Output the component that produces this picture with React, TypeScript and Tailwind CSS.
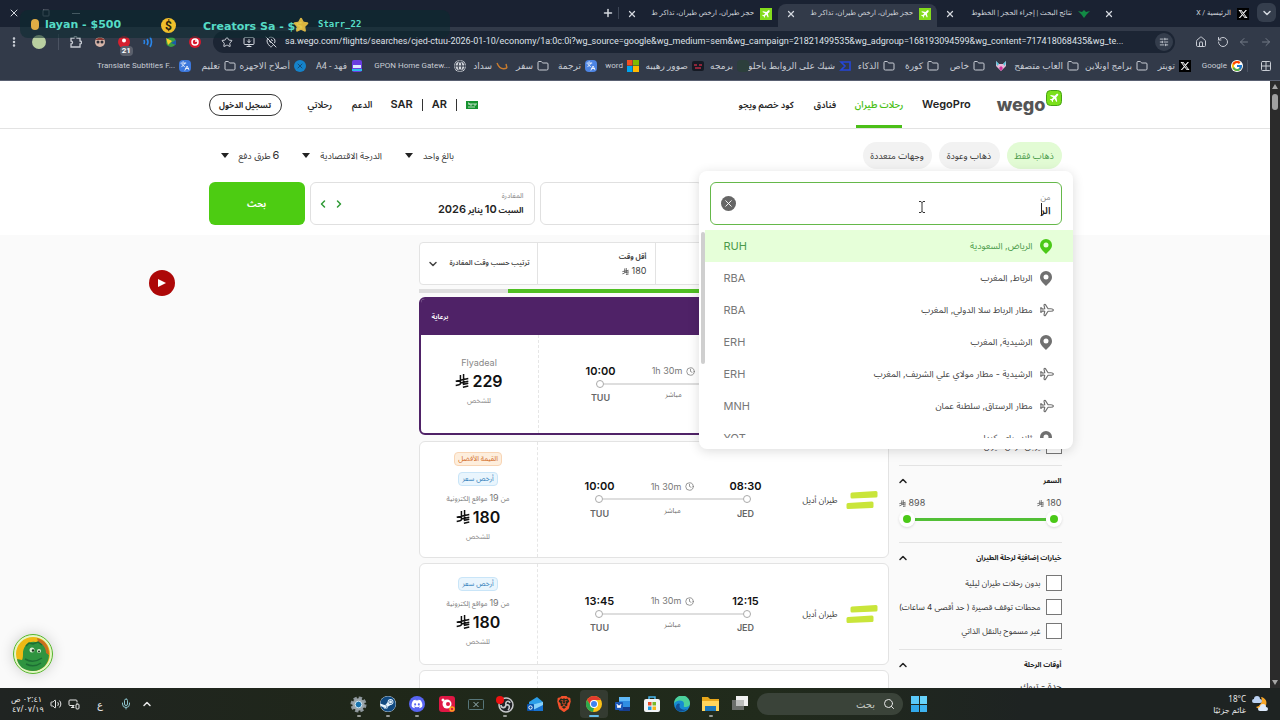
import React from 'react';
import {
  ChevronDown, ChevronLeft, ChevronRight, ChevronUp, Clock, Folder, Globe, Grid2x2, Home,
  ArrowLeft, ArrowRight, Languages, MapPinOff, Mic, MonitorDown, MonitorSmartphone, MoreVertical,
  Plane, Plus, Puzzle, RotateCcw, Search, SlidersHorizontal, Square, Star, Volume2, X,
} from 'lucide-react';
import { FaBrave, FaDiscord, FaSteam, FaXTwitter } from 'react-icons/fa6';
import { FcGoogle } from 'react-icons/fc';

const url =
  'sa.wego.com/flights/searches/cjed-ctuu-2026-01-10/economy/1a:0c:0i?wg_source=google&wg_medium=sem&wg_campaign=21821499535&wg_adgroup=168193094599&wg_content=717418068435&wg_te...';

function WegoIcon({ className }: { className: string }) {
  return (
    <svg viewBox="0 0 16 16" className={className}>
      <rect width="16" height="16" fill="#84dc1c" />
      <path d="M12.6 3.4c.6.6.4 1.2-.1 1.8l-2 2 1 4.7-1 .9-2-3.9-2 1.9.2 1.6-.8.7-1-2.2-2.1-1 .7-.8 1.6.2 1.9-2-3.9-2 .9-1 4.7 1 2-2c.7-.5 1.3-.6 1.9.1z" fill="#fff" />
    </svg>
  );
}

function Riyal({ className }: { className: string }) {
  return (
    <svg viewBox="0 0 16 16" className={className} fill="none" stroke="currentColor" strokeWidth="1.7">
      <path d="M6.200 1v9.500c0 1-.7 1.600-1.600 1.800L.8 13.200M9.800 0v11.800l5.400-1.200M.8 8.300l14.400-3.100M6.200 10.300l9-2M9 15.200l6.200-1.400" />
    </svg>
  );
}

const tabs = [
  { title: 'الرئيسية / X', icon: <FaXTwitter className="size-3 bg-black p-px text-white" />, active: false },
  {
    title: 'نتائج البحث | إجراء الحجز | الخطوط',
    icon: (
      <svg viewBox="0 0 12 12" className="size-3" fill="#128a45">
        <path d="M0 3l4 1 2-2 2 2 4-1-3 3-3 4-3-4z" />
      </svg>
    ),
    active: false,
  },
  { title: 'حجز طيران، ارخص طيران، تذاكر ط', icon: <WegoIcon className="size-3" />, active: true },
  { title: 'حجز طيران، ارخص طيران، تذاكر ط', icon: <WegoIcon className="size-3" />, active: false },
];

const folder = <Folder className="size-3 text-[#c8ccd4]" />;

const bookmarks = [
  { label: 'Google', latin: true, width: 'w-[52px]', icon: <FcGoogle className="size-3 rounded-full bg-white" /> },
  { label: 'تويتر', width: 'w-[43px]', icon: <FaXTwitter className="size-3 bg-black p-px text-white" /> },
  { label: 'برامج اونلاين', width: 'w-[69px]', icon: folder },
  { label: 'العاب متصفح', width: 'w-[72px]', icon: folder },
  {
    label: '',
    width: 'w-[22px]',
    icon: (
      <svg viewBox="0 0 12 12" className="size-3">
        <path d="M1 1l3 3h4l3-3v5L6 11 1 6z" fill="#e9b9d8" />
        <path d="M1 1l3 3-2 2zM11 1L8 4l2 2z" fill="#42c8d8" />
        <path d="M4 8l2-2 2 2-2 3z" fill="#d22f9b" />
      </svg>
    ),
  },
  { label: 'خاص', width: 'w-[46px]', icon: folder },
  { label: 'كورة', width: 'w-[44px]', icon: folder },
  { label: 'الذكاء', width: 'w-[44px]', icon: folder },
  {
    label: 'شيك على الروابط ياحلو',
    width: 'w-[102px]',
    icon: (
      <svg viewBox="0 0 12 12" className="size-3" fill="none" stroke="#2446d8" strokeWidth="1.6">
        <path d="M2 2h9v8H2l4-4z" />
      </svg>
    ),
  },
  { label: 'برمجه', width: 'w-[45px]', icon: <span className="block size-3 rounded-sm bg-[#2c3f3c]" /> },
  {
    label: 'صوور رهيبه',
    width: 'w-[65px]',
    icon: (
      <svg viewBox="0 0 12 12" className="size-3">
        <rect width="12" height="10" y="1" rx="2" fill="#151a24" />
        <path d="M2 5h3M7 5h3M3 8h6" stroke="#b52b43" strokeWidth="1.5" />
      </svg>
    ),
  },
  {
    label: 'word',
    latin: true,
    width: 'w-[42px]',
    icon: (
      <svg viewBox="0 0 12 12" className="size-3">
        <path fill="#f25022" d="M0 0h5.500v5.500H0z" />
        <path fill="#7fba00" d="M6 0h6v5.500H6z" />
        <path fill="#00a4ef" d="M0 6h5.500v6H0z" />
        <path fill="#ffb900" d="M6 6h6v6H6z" />
      </svg>
    ),
  },
  { label: 'ترجمة', width: 'w-[48px]', icon: <Languages className="size-3 rounded-sm bg-[#4d84e2] p-px text-white" /> },
  { label: 'سفر', width: 'w-[41px]', icon: folder },
  {
    label: 'سداد',
    width: 'w-[42px]',
    icon: (
      <svg viewBox="0 0 12 12" className="size-3" fill="none" stroke="#c97c2e" strokeWidth="1.4">
        <path d="M1 3c2 5 5 7 10 5M10 4l1 4" />
      </svg>
    ),
  },
  { label: 'GPON Home Gatew...', latin: true, width: 'w-[103px]', icon: <Globe className="size-3 rounded-full bg-[#d5d8de] text-[#323a49]" /> },
  {
    label: 'فهد - A4',
    width: 'w-[57px]',
    icon: (
      <svg viewBox="0 0 12 12" className="size-3">
        <rect width="10" height="12" x="1" rx="2" fill="#6a3de0" />
        <path d="M2 5h8v3H2z" fill="#dfe8ff" />
        <path d="M1 9h10v2H1z" fill="#2bb9ea" />
      </svg>
    ),
  },
  { label: 'أصلاح الاجهزه', width: 'w-[70px]', icon: <X className="size-3 rounded-full bg-[#1582c9] p-0.5 text-[#14304e]" /> },
  { label: 'تعليم', width: 'w-[45px]', icon: folder },
  { label: 'Translate Subtitles F...', latin: true, width: 'w-[100px]', icon: <Languages className="size-3 rounded-sm bg-[#3c78dc] p-px text-white" /> },
];

function BrowserChrome() {
  return (
    <header className="relative flex flex-none flex-col bg-[#1a2232] text-[7px] text-[#d3d7de]">
      <div className="flex h-[27px] items-end">
        <button className="mb-[5px] mr-1 ml-0.5 grid size-[19px] place-items-center rounded-md bg-[#353e4d]" aria-label="البحث في علامات التبويب">
          <ChevronDown className="size-3" strokeWidth={3} />
        </button>
        {tabs.map((tab, i) => (
          <div
            key={i}
            className={
              tab.active
                ? 'flex h-[23px] w-[159px] items-center gap-1.5 rounded-t-lg bg-[#323a49] pr-1.5 pl-2 pb-1'
                : 'flex h-[23px] w-[159px] items-center gap-1.5 pr-1.5 pl-2 pb-1'
            }
          >
            {tab.icon}
            <span className="whitespace-nowrap">{tab.title}</span>
            <button className="mr-auto" aria-label="إغلاق"><X className="size-2.5" strokeWidth={3} /></button>
          </div>
        ))}
        <span className="mb-2 h-3 w-px bg-[#3d4656]" />
        <button className="mb-2 mr-1" aria-label="علامة تبويب جديدة"><Plus className="size-3" strokeWidth={3} /></button>
        <div className="mb-2 mr-auto flex w-[86px] items-center justify-between pl-2" dir="ltr">
          <X className="size-3" />
          <Square className="size-2 text-[#8b919c]" />
          <span className="mr-1.5 h-px w-2 bg-[#8b919c]" />
        </div>
      </div>

      <div className="flex h-[30px] items-center bg-[#323a49]">
        <div className="flex w-[105px] flex-none items-center justify-between pr-2 pl-5 text-[#c8ccd4]">
          <ArrowRight className="size-3 text-[#737a87]" />
          <ArrowLeft className="size-3 text-[#737a87]" />
          <RotateCcw className="size-3" />
          <Home className="size-3" />
        </div>
        <div className="flex h-[22px] min-w-0 flex-1 items-center gap-2 rounded-full bg-[#1c2534] pr-0.5 pl-2">
          <span className="grid size-[18px] flex-none place-items-center rounded-full bg-[#343d4c]"><SlidersHorizontal className="size-2.5" /></span>
          <input
            dir="ltr"
            aria-label="شريط العنوان"
            defaultValue={url}
            className="min-w-0 flex-1 bg-transparent text-[9px] text-[#dfe2e8] outline-none"
          />
          <MapPinOff className="size-3 flex-none" />
          <MonitorDown className="mr-0.5 size-3 flex-none" />
          <Star className="mr-0.5 size-3 flex-none" />
        </div>
        <div className="flex w-[213px] flex-none items-center justify-between pr-3 pl-2">
          <svg viewBox="0 0 12 12" className="size-3">
            <circle cx="6" cy="6" r="6" fill="#d7192e" />
            <circle cx="6" cy="6" r="3" fill="none" stroke="#fff" strokeWidth="1.5" />
            <circle cx="7" cy="5" r="1" fill="#fff" />
          </svg>
          <svg viewBox="0 0 12 12" className="size-3">
            <circle cx="6" cy="6" r="5" fill="#3b9c46" />
            <path d="M1 2l6 3-4 4z" fill="#f3cf2c" />
            <path d="M6 7l5-3v5z" fill="#1d59a8" />
          </svg>
          <svg viewBox="0 0 12 12" className="size-3" fill="none" stroke="#2a86ea" strokeWidth="1.6">
            <path d="M2 4q1 2 0 4M5 3q2 3 0 6M8 1q3 5 0 10" />
          </svg>
          <span className="relative">
            <svg viewBox="0 0 12 12" className="size-3">
              <circle cx="6" cy="6" r="6" fill="#d5202f" />
              <circle cx="6" cy="4.500" r="2" fill="#fff" />
            </svg>
            <span className="absolute -bottom-2 left-0.5 rounded-sm bg-[#5a606c] px-0.5 text-[8px] leading-[10px] font-bold text-white">21</span>
          </span>
          <svg viewBox="0 0 12 12" className="size-3">
            <circle cx="6" cy="6" r="5" fill="#d6b4a8" />
            <path d="M1 4q5-5 10 0z" fill="#8c3a36" />
            <circle cx="4" cy="6" r="1.500" fill="#2c2f3a" />
            <circle cx="8" cy="6" r="1.500" fill="#2c2f3a" />
          </svg>
          <svg viewBox="0 0 12 12" className="size-3" fill="none" stroke="#c8ccd4" strokeWidth="1.300">
            <path d="M1 2h3a1.500 1.500 0 0 1 3 0h3v3a1.500 1.500 0 0 1 0 3v3H1V8a1.500 1.500 0 0 0 0-3z" />
          </svg>
          <span className="h-4 w-px bg-[#4b5362]" />
          <span className="size-[14px] rounded-full bg-[#b9cfa0]" />
          <MoreVertical className="size-3" strokeWidth={3} />
        </div>
      </div>

      <nav className="flex h-6 items-center border-b border-[#596071] bg-[#323a49] pr-2 pb-[5px] text-[#c8ccd4]">
        <Grid2x2 className="size-3 flex-none" />
        <span className="mr-3 ml-1 h-3 w-px flex-none bg-[#4b5362]" />
        {bookmarks.map((item, i) => (
          <a key={i} href="#" className={`flex flex-none items-center gap-1 whitespace-nowrap ${item.width}`}>
            <span className="flex-none">{item.icon}</span>
            {item.latin
              ? <span dir="ltr" className="text-[8px]">{item.label}</span>
              : <span className="text-[9px] leading-3">{item.label}</span>}
          </a>
        ))}
      </nav>

      {/* stream donation ticker over the tab strip */}
      <div className="absolute top-[10px] left-5 h-7 w-[430px] rounded-lg bg-[#0b2a30]/55 text-[#56dcc6]" dir="ltr">
        <span className="absolute top-[9px] left-[11px] h-[11px] w-2 rounded-sm bg-[#e0ad45]" />
        <span className="absolute top-[7px] left-[25px] font-['DejaVu_Sans'] text-[11px] leading-4 font-bold whitespace-nowrap">layan - $500</span>
        <span className="absolute top-2 left-[141px] grid size-[15px] place-items-center rounded-full bg-[#f0c02c] text-[12px] leading-none font-bold text-[#28240f]">$</span>
        <span className="absolute top-[9px] left-[183px] font-['DejaVu_Sans'] text-[11px] leading-4 font-bold whitespace-nowrap">Creators Sa - $5</span>
        <Star className="absolute top-[7px] left-[273px] size-4 fill-[#f2c640]/90 text-[#d8b545]" />
        <span className="absolute top-[6px] left-[298px] font-['DejaVu_Sans_Mono'] text-[9px] leading-4 font-bold">Starr_22</span>
      </div>
    </header>
  );
}

function SiteHeader() {
  return (
    <div className="border-b border-[#e3e3e3] bg-white">
      <div className="mx-auto flex h-[47px] max-w-[853px] items-center justify-between text-[9px] font-semibold text-[#242424]">
        <div className="flex h-full items-center gap-5 whitespace-nowrap">
          <a href="#" className="ml-1.5 flex items-start text-[#555]" dir="ltr" aria-label="wego">
            <span className="mt-px text-[18px] leading-6 font-extrabold">wego</span>
            <svg viewBox="0 0 16 16" className="-mt-0.5 size-4">
              <rect x=".5" y=".5" width="15" height="15" rx="4" fill="#7be01a" stroke="#45a313" />
              <path d="M12 4c.5.6.3 1-.1 1.5L10.3 7.2l.9 4-.9.7-1.700-3.200-1.600 1.600.1 1.300-.7.6-.8-1.800-1.800-.8.6-.7 1.300.1 1.600-1.600L4.100 5.700l.8-.8 3.900.8L10.500 4c.5-.4 1-.5 1.500 0z" fill="#fff" />
            </svg>
          </a>
          <a href="#" className="text-[11px]">WegoPro</a>
          <a href="#" className="flex h-full w-[46px] items-center justify-center border-b-[3px] border-[#4bbf18] pt-[3px] text-[#4bbf18]">رحلات طيران</a>
          <a href="#">فنادق</a>
          <a href="#">كود خصم ويجو</a>
        </div>
        <div className="flex items-center whitespace-nowrap">
          <svg viewBox="0 0 12 8" className="h-2 w-3">
            <rect width="12" height="8" fill="#16922f" />
            <path d="M2 2h1v2M4 2v2h2V2M8 2v2h2V2M2 6h7" fill="none" stroke="#fff" strokeWidth=".7" />
          </svg>
          <span className="mx-[9px] h-3 w-px bg-[#333]" />
          <a href="#" className="text-[11px]">AR</a>
          <span className="mx-[9px] h-3 w-px bg-[#333]" />
          <a href="#" className="text-[11px]">SAR</a>
          <a href="#" className="mr-[18px]">الدعم</a>
          <a href="#" className="mr-5">رحلاتي</a>
          <button className="mr-[26px] h-[22px] w-[73px] rounded-full border border-[#333] text-[8px] font-bold">تسجيل الدخول</button>
        </div>
      </div>
    </div>
  );
}

const suggestions = [
  { name: 'الرياض, السعودية', code: 'RUH', airport: false },
  { name: 'الرباط, المغرب', code: 'RBA', airport: false },
  { name: 'مطار الرباط سلا الدولي, المغرب', code: 'RBA', airport: true },
  { name: 'الرشيدية, المغرب', code: 'ERH', airport: false },
  { name: 'الرشيدية - مطار مولاي علي الشريف, المغرب', code: 'ERH', airport: true },
  { name: 'مطار الرستاق, سلطنة عمان', code: 'MNH', airport: true },
  { name: 'ثاندر باي, كندا', code: 'YQT', airport: false },
];

function Pin({ className }: { className: string }) {
  return (
    <svg viewBox="0 0 12 15" className={className} fill="currentColor" fillRule="evenodd">
      <path d="M6 0a6 6 0 0 1 6 6c0 4-3.500 6-6 9C3.500 12 0 10 0 6a6 6 0 0 1 6-6zm0 3.500a2.500 2.500 0 1 0 0 5 2.500 2.500 0 0 0 0-5z" />
    </svg>
  );
}

function OriginPopup() {
  return (
    <div className="absolute -top-[11px] -right-[11px] z-20 h-[278px] w-[374px] rounded-lg bg-white pt-[11px] shadow-[0_2px_12px_rgba(0,0,0,0.14)]">
      <div className="mx-[11px] flex h-[43px] items-center rounded-md border border-[#65b84a] px-[10px]">
        <div className="flex min-w-0 flex-1 flex-col">
          <label htmlFor="origin" className="text-[8px] leading-3 text-[#888]">من</label>
          <input id="origin" defaultValue="الر" className="w-full text-[10px] leading-[14px] font-semibold text-[#222] outline-none" />
        </div>
        <button className="grid size-[15px] place-items-center rounded-full bg-[#666] text-white" aria-label="مسح"><X className="size-[11px]" strokeWidth={2} /></button>
      </div>
      <span className="absolute top-8 right-[31px] h-[13px] w-px bg-[#222]" />
      <div className="mt-[5px] flex h-[208px] overflow-hidden">
        <ul className="min-w-0 flex-1">
          {suggestions.map((s, i) => (
            <li key={i}>
              <button
                className={
                  i === 0
                    ? 'flex h-8 w-full items-center bg-[#e6ffd9] pr-5 pl-[19px] text-[#4a9a4a]'
                    : 'flex h-8 w-full items-center pr-5 pl-[19px] text-[#444]'
                }
              >
                <span className={i === 0 ? 'grid w-[14px] place-items-center text-[#4bc918]' : 'grid w-[14px] place-items-center text-[#707070]'}>
                  {s.airport ? <Plane className="size-[14px] rotate-45" strokeWidth={2} /> : <Pin className="h-[15px] w-3" />}
                </span>
                <span className="mr-1.5 text-[9px] whitespace-nowrap">{s.name}</span>
                <span className={i === 0 ? 'mr-auto text-[11px]' : 'mr-auto text-[11px] text-[#777]'}>{s.code}</span>
              </button>
            </li>
          ))}
        </ul>
        <div className="mt-0.5 ml-0.5 h-[132px] w-1 rounded-full bg-[#cfcfcf]" />
      </div>
      <svg viewBox="0 0 8 12" className="absolute top-[30px] left-[219px] h-3 w-2" fill="none" stroke="#333">
        <path d="M1 .5h2l1 1 1-1h2M4 1v10M1 11.500h2l1-1 1 1h2" />
      </svg>
    </div>
  );
}

function Caret() {
  return <svg viewBox="0 0 8 5" className="mr-2.5 h-[5px] w-2" fill="#222"><path d="M0 0h8L4 5z" /></svg>;
}

function SearchForm() {
  return (
    <div className="bg-white">
      <div className="mx-auto max-w-[853px] pt-[13px] pb-[10px]">
        <div className="flex h-[27px] items-center justify-between text-[9px] whitespace-nowrap text-[#333]">
          <div className="flex gap-[7px]">
            <button className="h-[27px] w-[55px] rounded-full bg-[#e2fbd4] text-[#4a9a4a]">ذهاب فقط</button>
            <button className="h-[27px] w-[61px] rounded-full bg-[#f2f2f2]">ذهاب وعودة</button>
            <button className="h-[27px] w-[69px] rounded-full bg-[#f2f2f2]">وجهات متعددة</button>
          </div>
          <div className="flex pl-3">
            <button className="flex items-center">بالغ واحد<Caret /></button>
            <button className="mr-[23px] flex items-center">الدرجة الاقتصادية<Caret /></button>
            <button className="mr-[23px] flex items-center"><span className="ml-0.5 text-[11px]">6</span>طرق دفع<Caret /></button>
          </div>
        </div>
        <div className="mt-[13px] flex h-[43px] gap-[5px]">
          <div className="relative flex-1">
            <OriginPopup />
          </div>
          <button className="flex-none basis-[163px] rounded-md border border-[#e0e0e0]" aria-label="إلى" />
          <div className="flex w-[225px] items-center justify-between rounded-md border border-[#e0e0e0] pr-[10px] pl-1.5">
            <div className="text-[#222]">
              <p className="text-[7px] leading-3 text-[#888]">المغادرة</p>
              <p className="text-[8px] leading-[14px] font-bold">
                السبت <span className="text-[11px] font-semibold">10</span> يناير <span className="text-[11px] font-semibold">2026</span>
              </p>
            </div>
            <div className="flex gap-1 text-[#2f9a35]" dir="ltr">
              <ChevronLeft className="size-3" strokeWidth={3} />
              <ChevronRight className="size-3" strokeWidth={3} />
            </div>
          </div>
          <button className="w-24 rounded-md bg-[#4dcc12] text-[9px] font-bold text-white">بحث</button>
        </div>
      </div>
    </div>
  );
}

function Checkbox({ id, label }: { id: string; label: string }) {
  return (
    <div className="flex h-6 items-center gap-[5px]">
      <input id={id} type="checkbox" className="size-4 flex-none appearance-none border border-[#777] bg-white" />
      <label htmlFor={id} className="text-[8px] whitespace-nowrap text-[#333]">{label}</label>
    </div>
  );
}

function FilterTitle({ children }: { children: React.ReactNode }) {
  return (
    <button className="flex h-[31px] w-full items-center justify-between border-t border-[#e3e3e3] text-[7px] font-bold text-[#222]">
      <span>{children}</span>
      <ChevronUp className="-ml-0.5 size-3" strokeWidth={3} />
    </button>
  );
}

function Filters() {
  return (
    <aside className="w-[163px] flex-none pt-[192px]">
      <Checkbox id="known" label="يرجى عرض طيران" />
      <div className="h-[7px]" />
      <FilterTitle>السعر</FilterTitle>
      <div className="flex h-[14px] items-center justify-between text-[9px] text-[#555]">
        <span className="flex items-center gap-[3px]">180<Riyal className="size-[7px]" /></span>
        <span className="flex items-center gap-[3px]">898<Riyal className="size-[7px]" /></span>
      </div>
      <div className="flex h-[18px] items-center">
        <span className="grid size-4 place-items-center rounded-full bg-white shadow"><i className="size-2 rounded-full bg-[#4bc918]" /></span>
        <span className="h-[3px] flex-1 bg-[#52bf36]" />
        <span className="grid size-4 place-items-center rounded-full bg-white shadow"><i className="size-2 rounded-full bg-[#4bc918]" /></span>
      </div>
      <div className="h-[14px]" />
      <FilterTitle>خيارات إضافيّة لرحلة الطيران</FilterTitle>
      <div className="-mt-0.5">
        <Checkbox id="night" label="بدون رحلات طيران ليلية" />
        <Checkbox id="short" label="محطات توقف قصيرة ( حد أقصى 4 ساعات)" />
        <Checkbox id="self" label="غير مسموح بالنقل الذاتي" />
      </div>
      <div className="h-[6px]" />
      <FilterTitle>أوقات الرحلة</FilterTitle>
      <p className="text-[9px] leading-3 text-[#333]">جدة - تبوك</p>
    </aside>
  );
}

type Flight = { from: string; to: string; price: string; badges: string[]; provider?: string };

function FlightRow({ flight }: { flight: Flight }) {
  return (
    <>
      <div className="flex flex-1 items-center pl-[45px] pr-[10px]">
        <svg viewBox="0 0 32 20" className="h-5 w-8 flex-none" fill="#c9e53a">
          <path d="M6 2.500q-1.500 0-1.500 1.500v3q0 1.500 1.500 1.500l24-1q1.500 0 1.500-1.500V2.500Q31.500 1 30 1z" />
          <path d="M2 13q-1.500 0-1.500 1.500v3Q.5 19 2 19l24-1q1.500 0 1.500-1.500V13q0-1.500-1.500-1.500z" />
        </svg>
        <span className="mr-2 text-[8px] whitespace-nowrap text-[#333]">طيران أديل</span>
        <div className="mr-auto flex h-[46px] w-[180px] flex-none flex-col justify-between pt-[3px]" dir="ltr">
          <div className="flex h-[14px] items-center justify-between">
            <b className="w-[34px] text-center text-[11px] font-semibold text-[#111]">{flight.to}</b>
            <span className="flex items-center gap-1 text-[9px] text-[#777]">1h 30m<Clock className="size-[9px]" /></span>
            <b className="w-[34px] text-center text-[11px] font-semibold text-[#111]">{flight.from}</b>
          </div>
          <div className="flex items-center px-3">
            <i className="size-2 rounded-full border border-[#aaa]" />
            <i className="h-0.5 flex-1 bg-[#dedede]" />
            <i className="size-2 rounded-full border border-[#aaa]" />
          </div>
          <div className="flex items-center justify-between text-[9px] leading-3 text-[#666]">
            <span className="w-[34px] text-center font-semibold">TUU</span>
            <span className="pb-1.5 text-[7px] leading-3">مباشر</span>
            <span className="w-[34px] text-center font-semibold">JED</span>
          </div>
        </div>
      </div>
      <div className="flex w-[118px] flex-none flex-col items-center justify-center border-r border-dashed border-[#e6e6e6] pb-1 whitespace-nowrap">
        {flight.badges.map((badge) => (
          <span
            key={badge}
            className={
              badge === 'القيمة الأفضل'
                ? 'mb-1.5 h-[14px] rounded-sm border border-[#f8d5b5] bg-[#fdeedd] px-[3px] text-[7px] leading-3 text-[#d2691e]'
                : 'mb-1.5 h-[14px] rounded-sm border border-[#c9e5f8] bg-[#e9f5fd] px-[3px] text-[7px] leading-3 text-[#2d7cb8]'
            }
          >
            {badge}
          </span>
        ))}
        {flight.provider
          ? <span className="text-[9px] leading-3 text-[#888]">{flight.provider}</span>
          : <span className="text-[7px] leading-3 text-[#777]">من <span className="text-[9px]">19</span> مواقع إلكترونية</span>}
        <strong className="my-0.5 flex h-5 items-center gap-[3px] text-[16px] leading-5 font-semibold text-[#111]">
          {flight.price}
          <Riyal className="size-[14px]" />
        </strong>
        <span className="mt-0.5 text-[7px] leading-3 text-[#888]">للشخص</span>
      </div>
    </>
  );
}

function Results() {
  return (
    <main className="flex w-[470px] flex-none flex-col">
      <div className="flex h-[43px] flex-none rounded border border-[#e3e3e3] bg-white text-[7px] text-[#444]">
        <div className="flex-1 border-l border-[#e3e3e3]" />
        <div className="w-[118px] border-l border-[#e3e3e3] pt-[7px] pr-2">
          <p className="leading-[14px] font-bold">أقل وقت</p>
          <p className="flex items-center gap-[3px] text-[9px] leading-[14px]">180<Riyal className="size-[7px]" /></p>
        </div>
        <button className="flex w-[117px] items-center justify-between pr-[7px] pl-[7px] font-semibold whitespace-nowrap">
          ترتيب حسب وقت المغادرة
          <ChevronDown className="size-3" strokeWidth={3} />
        </button>
      </div>
      <div className="mt-1 h-1 flex-none bg-[#dedede]"><div className="h-1 w-[81%] bg-[#4fbf23]" /></div>

      <article className="mt-1 flex h-[138px] flex-none flex-col overflow-hidden rounded-md border-2 border-[#4f2267] bg-white">
        <div className="flex h-9 items-center justify-end bg-[#4f2267] px-[11px] text-[7px] font-semibold text-white">برعاية</div>
        <div className="flex flex-1">
          <FlightRow flight={{ from: '08:30', to: '10:00', price: '229', badges: [], provider: 'Flyadeal' }} />
        </div>
      </article>
      <article className="mt-1.5 flex h-[117px] flex-none rounded-md border border-[#e3e3e3] bg-white">
        <FlightRow flight={{ from: '08:30', to: '10:00', price: '180', badges: ['القيمة الأفضل', 'أرخص سعر'] }} />
      </article>
      <article className="mt-[5px] flex h-[102px] flex-none rounded-md border border-[#e3e3e3] bg-white">
        <FlightRow flight={{ from: '12:15', to: '13:45', price: '180', badges: ['أرخص سعر'] }} />
      </article>
      <article className="mt-[5px] flex h-[102px] flex-none rounded-md border border-[#e3e3e3] bg-white">
        <div className="flex-1" />
        <div className="w-[118px] border-r border-dashed border-[#e6e6e6]" />
      </article>
    </main>
  );
}

const apps = [
  {
    name: 'الإعدادات',
    running: true,
    icon: (
      <svg viewBox="0 0 18 18" className="size-[17px]">
        <circle cx="9" cy="9" r="7" fill="none" stroke="#8e979c" strokeWidth="3" strokeDasharray="3.500 2" />
        <circle cx="9" cy="9" r="6.500" fill="#9ca5aa" />
        <circle cx="9" cy="9" r="3.500" fill="#1772ae" stroke="#d3edf9" />
      </svg>
    ),
  },
  { name: 'Steam', running: true, icon: <FaSteam className="size-4 rounded-full bg-[#e5f2fb] text-[#114a80]" /> },
  { name: 'Discord', running: true, icon: <FaDiscord className="size-4 rounded-full bg-[#5865f2] p-0.5 text-white" /> },
  {
    name: 'Recorder',
    running: false,
    icon: (
      <svg viewBox="0 0 16 16" className="size-4">
        <rect width="16" height="16" rx="3" fill="#df1744" />
        <circle cx="8" cy="8" r="4.500" fill="#fff" />
        <circle cx="4" cy="4" r="1.500" fill="#fff" />
        <circle cx="9" cy="8" r="2" fill="#df1744" />
        <circle cx="13" cy="13" r="2" fill="none" stroke="#ffa51e" strokeWidth="1.500" />
      </svg>
    ),
  },
  {
    name: 'Capture',
    running: false,
    icon: (
      <svg viewBox="0 0 16 16" className="size-4" fill="none" stroke="#57767a">
        <rect x=".5" y="3.500" width="15" height="10" rx="1" />
        <path d="M5.500 6l5 5M10.500 6l-5 5" stroke="#9ab4b8" />
      </svg>
    ),
  },
  {
    name: 'OBS Studio',
    running: true,
    icon: (
      <svg viewBox="0 0 18 18" className="size-[18px]">
        <circle cx="10" cy="9" r="7" fill="#202226" stroke="#c7c9cb" strokeWidth="1.500" />
        <path d="M10 9c-1-4 3-5 4-2M10 9c4-1 4 3 2 5M10 9c-1 4-5 3-5 0" fill="none" stroke="#c7c9cb" strokeWidth="1.600" />
        <circle cx="4" cy="4" r="4" fill="#ee1111" />
      </svg>
    ),
  },
  {
    name: 'Outlook',
    running: false,
    icon: (
      <svg viewBox="0 0 16 16" className="size-4">
        <path d="M2 6l8-5 6 5v9H2z" fill="#2b9ee9" />
        <path d="M4 9l12-3v9H4z" fill="#86d1fa" />
        <path d="M4 15l12-6v6z" fill="#1672d0" />
        <rect y="8" width="7" height="7" rx="1" fill="#0c55ae" />
        <circle cx="3.500" cy="11.500" r="1.700" fill="none" stroke="#fff" />
      </svg>
    ),
  },
  { name: 'Brave', running: false, icon: <FaBrave className="size-4 text-[#f4512c]" /> },
  {
    name: 'Chrome',
    running: true,
    icon: (
      <svg viewBox="0 0 16 16" className="size-4">
        <circle cx="8" cy="8" r="8" fill="#fbc116" />
        <path d="M1.070 4A8 8 0 0 1 14.900 4H8L5 10z" fill="#e33b2e" />
        <path d="M1.070 4L5 10l3 2-1 4A8 8 0 0 1 1.070 4z" fill="#2da94f" />
        <circle cx="8" cy="8" r="4" fill="#fff" />
        <circle cx="8" cy="8" r="3" fill="#3f82ef" />
      </svg>
    ),
  },
  {
    name: 'Word',
    running: false,
    icon: (
      <svg viewBox="0 0 16 16" className="size-4">
        <rect x="4" y="1" width="11" height="14" rx="1" fill="#2f8ee3" />
        <path d="M4 1h11v4H4z" fill="#5fb8f7" />
        <path d="M4 11h11v4H4z" fill="#153f91" />
        <rect y="6" width="8" height="8" rx="1" fill="#1a57b7" />
        <path d="M2 8l1 4 1-3 1 3 1-4" fill="none" stroke="#fff" />
      </svg>
    ),
  },
  {
    name: 'Microsoft Store',
    running: false,
    icon: (
      <svg viewBox="0 0 16 16" className="size-4">
        <path d="M5 4V1h6v3" fill="none" stroke="#49b6ee" strokeWidth="1.500" />
        <rect y="3" width="16" height="13" rx="2" fill="#f1f4f6" />
        <path fill="#e74b28" d="M4 6h3.500v3.500H4z" />
        <path fill="#76b82a" d="M8.500 6H12v3.500H8.500z" />
        <path fill="#1c99e0" d="M4 10.500h3.500V14H4z" />
        <path fill="#f5b81c" d="M8.500 10.500H12V14H8.500z" />
      </svg>
    ),
  },
  {
    name: 'Edge',
    running: false,
    icon: (
      <svg viewBox="0 0 16 16" className="size-4">
        <circle cx="8" cy="8" r="8" fill="#168bd2" />
        <path d="M0 8a8 8 0 0 1 16-1c0 3-2 4-5 4-2 0-1-1-1-3 0-5-9-4-10 0z" fill="#4bd09b" />
        <path d="M6 8c-2 4 2 7 7 5-3 4-13 3-11-3 1-3 3-3 4-2z" fill="#124f96" />
      </svg>
    ),
  },
  {
    name: 'مستكشف الملفات',
    running: true,
    icon: (
      <svg viewBox="0 0 17 15" className="h-[15px] w-[17px]">
        <path d="M0 1h6l2 2h9v12H0z" fill="#e8a71b" />
        <path d="M0 5h17v10H0z" fill="#ffd55c" />
        <path d="M3 10h11v5H3z" fill="#1b78bc" />
      </svg>
    ),
  },
  {
    name: 'عرض المهام',
    running: false,
    icon: (
      <svg viewBox="0 0 16 14" className="h-[14px] w-4">
        <rect y="4" width="12" height="10" fill="#6b6f6b" />
        <rect x="4" width="12" height="10" fill="#f1f1f1" />
        <path d="M4 4h8v6H4z" fill="#bcbebc" />
      </svg>
    ),
  },
];

function Taskbar() {
  return (
    <footer className="flex h-8 flex-none items-center bg-[linear-gradient(90deg,#202422,#1f2719_30%,#212b1c_60%,#1e2322_80%)] text-[8px] text-[#e8e8e8]">
      <div className="flex flex-1 items-center gap-1.5 pr-3">
        <svg viewBox="0 0 16 16" className="size-4">
          <path d="M9 1a6 6 0 1 1-5 10 7 7 0 0 0 5-10z" fill="#f5a52a" />
          <path d="M2 7a2 2 0 0 1 0-4 3 3 0 0 1 6 0 2 2 0 0 1 0 4z" fill="#bcd2f3" />
          <path d="M8 15a2 2 0 0 1 0-4 3 3 0 0 1 6 0 2 2 0 0 1 0 4z" fill="#dce9fb" />
        </svg>
        <div className="leading-[11px]">
          <p dir="ltr" className="text-right">18°C</p>
          <p>غائم جزئيًا</p>
        </div>
      </div>
      <div className="flex flex-none items-center">
        <button className="grid size-4 grid-cols-2 gap-px" aria-label="ابدأ">
          <i className="h-full bg-[#67d3fb]" /><i className="h-full bg-[#5bc9f9]" />
          <i className="h-full bg-[#3fb4f0]" /><i className="h-full bg-[#31a8ea]" />
        </button>
        <label className="mr-2 flex h-[22px] w-[146px] items-center gap-2 rounded-full bg-[#3a4339] px-2">
          <Search className="size-3 flex-none" />
          <input type="search" placeholder="بحث" className="w-full bg-transparent text-[10px] outline-none placeholder:text-[#c3c8c1]" />
        </label>
        <div className="mr-0.5 flex w-[411px]" dir="ltr">
          {apps.map((app) => (
            <button key={app.name} aria-label={app.name} className="flex flex-1 justify-center">
              <span
                className={
                  app.name === 'Chrome'
                    ? 'flex h-7 w-7 flex-col items-center justify-between rounded bg-[#343b31] pt-[6px] pb-px'
                    : 'flex h-7 w-7 flex-col items-center justify-between pt-[6px] pb-px'
                }
              >
                {app.icon}
                {app.running && <i className={app.name === 'Chrome' ? 'h-0.5 w-[10px] rounded-full bg-[#65bce9]' : 'h-0.5 w-1 rounded-full bg-[#979b96]'} />}
              </span>
            </button>
          ))}
        </div>
      </div>
      <div className="flex w-[344px] flex-none items-center justify-end pl-3">
        <ChevronUp className="size-3" strokeWidth={3} />
        <Mic className="mr-[9px] size-3 text-[#8cc4cc]" />
        <span className="mr-[17px] text-[10px]">ع</span>
        <MonitorSmartphone className="mr-[17px] size-3" />
        <Volume2 className="mr-1.5 size-3" />
        <div className="mr-2 w-[30px] text-left text-[8px] leading-[10px] whitespace-nowrap">
          <p>٠٢:٤١ ص</p>
          <p dir="ltr">٤٧/٠٧/١٩</p>
        </div>
      </div>
    </footer>
  );
}

export default function App() {
  return (
    <div dir="rtl" className="flex h-screen flex-col overflow-hidden font-['Inter','Noto_Sans_Arabic','DejaVu_Sans',sans-serif]">
      <div className="flex-none font-['Roboto','DejaVu_Sans',sans-serif]"><BrowserChrome /></div>
      <div className="flex min-h-0 flex-1">
        <div className="flex w-[10px] flex-none flex-col items-center justify-between bg-[#2b2b2b] py-[3px]">
          <div className="flex flex-col items-center gap-[5px]">
            <svg viewBox="0 0 6 5" className="h-[5px] w-1.5" fill="#a5a5a5"><path d="M3 0l3 5H0z" /></svg>
            <span className="h-4 w-1.5 rounded-full bg-[#a0a0a0]" />
          </div>
          <svg viewBox="0 0 6 5" className="h-[5px] w-1.5" fill="#a5a5a5"><path d="M3 5l3-5H0z" /></svg>
        </div>
        <div className="relative min-w-0 flex-1 overflow-hidden bg-[#fafafa]">
          <SiteHeader />
          <SearchForm />
          <div className="mx-auto flex max-w-[853px] items-start gap-[10px] pt-[7px]">
            <Filters />
            <Results />
          </div>
          <button className="absolute top-[189px] left-[149px] grid size-[26px] place-items-center rounded-full bg-[#ad0808]" aria-label="تشغيل">
            <svg viewBox="0 0 8 8" className="size-2" fill="#fff"><path d="M0 0l8 4-8 4z" /></svg>
          </button>
          <button className="absolute bottom-[14px] left-[13px] rounded-full shadow-[0_0_14px_rgba(0,0,0,0.18)]" aria-label="المساعد">
            <svg viewBox="0 0 40 40" className="size-10">
              <circle cx="20" cy="20" r="19.500" fill="#e4f7c5" stroke="#55b32d" />
              <circle cx="20" cy="20" r="17" fill="#efb915" />
              <path d="M24 4c8 2 12 8 12 16l-6 6z" fill="#c96f1e" />
              <path d="M4 25l5 1c1-2 1-4 1-8 1-7 6-11 12-10 7 0 11 5 11 11l3 2c0 9-7 16-16 16S5 32 4 25z" fill="#2f9440" />
              <path d="M12 25q8 5 17-1M13 30q8 4 15-1M13 12l3-3 4 1 5-2 4 3" fill="none" stroke="#1d6d34" strokeWidth="1.500" />
              <circle cx="19" cy="16" r="2.500" fill="#d8ecd0" />
              <circle cx="26" cy="17" r="2" fill="#d8ecd0" />
              <circle cx="20" cy="16.500" r="1.200" fill="#18351e" />
              <circle cx="26" cy="17.500" r="1" fill="#18351e" />
            </svg>
          </button>
        </div>
      </div>
      <div className="flex-none font-['Noto_Sans','DejaVu_Sans',sans-serif]"><Taskbar /></div>
    </div>
  );
}
